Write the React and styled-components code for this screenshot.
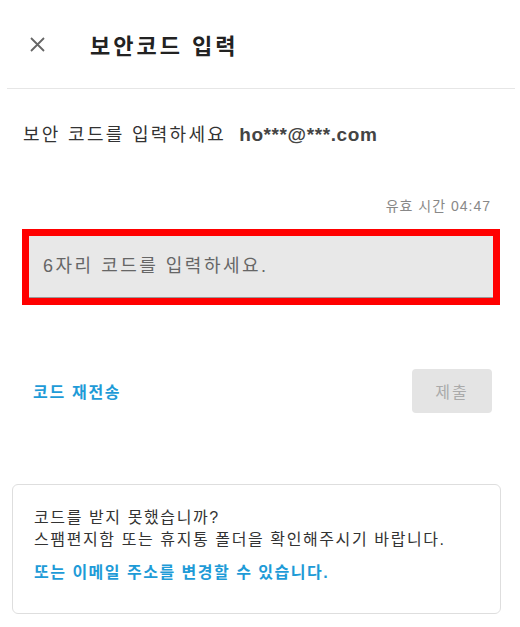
import React from 'react'
import styled, { createGlobalStyle } from 'styled-components'

const GlobalStyle = createGlobalStyle`
    body {
        margin: 0;
        background: #fff;
        font-family: 'Liberation Sans', 'Noto Sans CJK KR', sans-serif;
        color: #333;
    }
`

const Page = styled.div`
    width: 520px;
`

const Header = styled.div`
    display: flex;
    align-items: center;
    height: 88px;
    padding-left: 30px;
`

const CloseButton = styled.button`
    display: flex;
    padding: 0;
    border: none;
    background: none;
    cursor: pointer;
`

const Title = styled.h1`
    margin: 0 0 0 45px;
    font-size: 22px;
    font-weight: bold;
    letter-spacing: 3px;
    color: #222;
`

const Divider = styled.div`
    height: 1px;
    margin: 0 5px 0 7px;
    background: #e6e6e6;
`

const Subtitle = styled.p`
    margin: 33px 0 0;
    padding-left: 23px;
    font-size: 18px;
    line-height: 26px;
    letter-spacing: 2.3px;
    color: #333;
`

const Email = styled.span`
    margin-left: 13px;
    font-size: 19px;
    font-weight: bold;
    letter-spacing: 0.6px;
    color: #444;
`

const Timer = styled.div`
    margin-top: 48px;
    padding-right: 29px;
    text-align: right;
    font-size: 14px;
    line-height: 20px;
    letter-spacing: 1px;
    color: #888;
`

const Frame = styled.div`
    margin: 13px 20px 0 22px;
    border: 7px solid #ff0000;
`

const CodeInput = styled.input`
    display: block;
    box-sizing: border-box;
    width: 100%;
    height: 62px;
    padding: 0 14px;
    border: none;
    border-bottom: 1px solid #9a9a9a;
    background: #e8e8e8;
    font-family: inherit;
    font-size: 18px;
    letter-spacing: 2.5px;
    color: #555;
    outline: none;

    &::placeholder {
        color: #666;
    }
`

const Actions = styled.div`
    display: flex;
    justify-content: space-between;
    align-items: center;
    margin-top: 64px;
    padding: 0 28px 0 33px;
`

const Resend = styled.a`
    font-size: 16px;
    font-weight: bold;
    letter-spacing: 1.7px;
    color: #1e9bd7;
    cursor: pointer;
`

const Submit = styled.button`
    width: 80px;
    height: 44px;
    border: none;
    border-radius: 4px;
    background: #e4e4e4;
    font-family: inherit;
    font-size: 16px;
    letter-spacing: 2px;
    color: #aaa;
`

const Card = styled.div`
    margin: 71px 19px 0 12px;
    padding: 22px 21px 29px;
    border: 1px solid #dedede;
    border-radius: 6px;
`

const Text = styled.p`
    margin: 0;
    font-size: 16px;
    line-height: 22px;
    letter-spacing: 1.6px;
    color: #333;
`

const ChangeLink = styled.a`
    display: block;
    margin-top: 11px;
    font-size: 16px;
    line-height: 22px;
    font-weight: bold;
    letter-spacing: 1.5px;
    color: #1e9bd7;
    cursor: pointer;
`

class App extends React.Component {
    state = {
        code: ""
    }

    onChangeCode = (event) => {
        this.setState({ code: event.target.value })
    }

    render() {
        return (
            <Page>
                <GlobalStyle />
                <Header>
                    <CloseButton>
                        <svg width="15" height="15" viewBox="0 0 15 15">
                            <path d="M1 1L14 14M14 1L1 14" stroke="#666" strokeWidth="1.8" fill="none" />
                        </svg>
                    </CloseButton>
                    <Title>보안코드 입력</Title>
                </Header>
                <Divider />

                <Subtitle>
                    보안 코드를 입력하세요<Email>ho***@***.com</Email>
                </Subtitle>
                <Timer>유효 시간 04:47</Timer>

                <Frame>
                    <CodeInput
                        type="text"
                        placeholder="6자리 코드를 입력하세요."
                        value={this.state.code}
                        onChange={this.onChangeCode}
                    />
                </Frame>

                <Actions>
                    <Resend>코드 재전송</Resend>
                    <Submit disabled>제출</Submit>
                </Actions>

                <Card>
                    <Text>코드를 받지 못했습니까?</Text>
                    <Text>스팸편지함 또는 휴지통 폴더을 확인해주시기 바랍니다.</Text>
                    <ChangeLink>또는 이메일 주소를 변경할 수 있습니다.</ChangeLink>
                </Card>
            </Page>
        )
    }
}

export default App
